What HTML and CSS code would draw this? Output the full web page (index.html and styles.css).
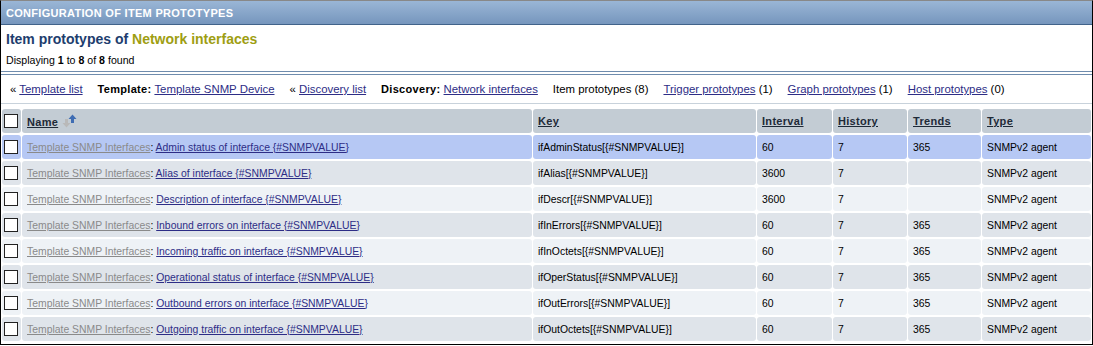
FILE: index.html
```html
<!DOCTYPE html>
<html>
  <head>
    <title>Configuration of item prototypes</title>
    <link rel="stylesheet" href="styles.css">
  </head>
  <body>
    <div class="frame">
      <div class="header-bar">CONFIGURATION OF ITEM PROTOTYPES</div>
      <div class="title-row">
        <span class="title-main">Item prototypes of</span>
        <span class="title-host">Network interfaces</span>
      </div>
      <div class="count-row">Displaying <b>1</b> to <b>8</b> of <b>8</b> found</div>
      <div class="nav-row">
        <span class="nav-item">« <a href="#">Template list</a></span>
        <span class="nav-item"><b>Template:</b> <a href="#">Template SNMP Device</a></span>
        <span class="nav-item">« <a href="#">Discovery list</a></span>
        <span class="nav-item"><b>Discovery:</b> <a href="#">Network interfaces</a></span>
        <span class="nav-item">Item prototypes (8)</span>
        <span class="nav-item"><a href="#">Trigger prototypes</a> (1)</span>
        <span class="nav-item"><a href="#">Graph prototypes</a> (1)</span>
        <span class="nav-item"><a href="#">Host prototypes</a> (0)</span>
      </div>

      <table class="list">
        <thead>
          <tr>
            <th class="col-check"><span class="checkbox"></span></th>
            <th class="col-name">
              <a href="#">Name</a>
              <span class="sort-arrows">
                <svg width="16" height="14" viewBox="0 0 16 14">
                  <path d="M3 5h3v4h2.5L4.5 13.5 0.5 9H3z" fill="#b9b9b9"/>
                  <path d="M9 9h3V5h2.5L10.5 0.5 6.5 5H9z" fill="#3f6db3"/>
                </svg>
              </span>
            </th>
            <th class="col-key"><a href="#">Key</a></th>
            <th class="col-interval"><a href="#">Interval</a></th>
            <th class="col-history"><a href="#">History</a></th>
            <th class="col-trends"><a href="#">Trends</a></th>
            <th class="col-type"><a href="#">Type</a></th>
          </tr>
        </thead>
        <tbody>
          <tr class="hover">
            <td><span class="checkbox"></span></td>
            <td><a class="tpl" href="#">Template SNMP Interfaces</a>: <a href="#">Admin status of interface {#SNMPVALUE}</a></td>
            <td>ifAdminStatus[{#SNMPVALUE}]</td>
            <td>60</td><td>7</td><td>365</td><td>SNMPv2 agent</td>
          </tr>
          <tr class="odd">
            <td><span class="checkbox"></span></td>
            <td><a class="tpl" href="#">Template SNMP Interfaces</a>: <a href="#">Alias of interface {#SNMPVALUE}</a></td>
            <td>ifAlias[{#SNMPVALUE}]</td>
            <td>3600</td><td>7</td><td></td><td>SNMPv2 agent</td>
          </tr>
          <tr class="even">
            <td><span class="checkbox"></span></td>
            <td><a class="tpl" href="#">Template SNMP Interfaces</a>: <a href="#">Description of interface {#SNMPVALUE}</a></td>
            <td>ifDescr[{#SNMPVALUE}]</td>
            <td>3600</td><td>7</td><td></td><td>SNMPv2 agent</td>
          </tr>
          <tr class="odd">
            <td><span class="checkbox"></span></td>
            <td><a class="tpl" href="#">Template SNMP Interfaces</a>: <a href="#">Inbound errors on interface {#SNMPVALUE}</a></td>
            <td>ifInErrors[{#SNMPVALUE}]</td>
            <td>60</td><td>7</td><td>365</td><td>SNMPv2 agent</td>
          </tr>
          <tr class="even">
            <td><span class="checkbox"></span></td>
            <td><a class="tpl" href="#">Template SNMP Interfaces</a>: <a href="#">Incoming traffic on interface {#SNMPVALUE}</a></td>
            <td>ifInOctets[{#SNMPVALUE}]</td>
            <td>60</td><td>7</td><td>365</td><td>SNMPv2 agent</td>
          </tr>
          <tr class="odd">
            <td><span class="checkbox"></span></td>
            <td><a class="tpl" href="#">Template SNMP Interfaces</a>: <a href="#">Operational status of interface {#SNMPVALUE}</a></td>
            <td>ifOperStatus[{#SNMPVALUE}]</td>
            <td>60</td><td>7</td><td>365</td><td>SNMPv2 agent</td>
          </tr>
          <tr class="even">
            <td><span class="checkbox"></span></td>
            <td><a class="tpl" href="#">Template SNMP Interfaces</a>: <a href="#">Outbound errors on interface {#SNMPVALUE}</a></td>
            <td>ifOutErrors[{#SNMPVALUE}]</td>
            <td>60</td><td>7</td><td>365</td><td>SNMPv2 agent</td>
          </tr>
          <tr class="odd">
            <td><span class="checkbox"></span></td>
            <td><a class="tpl" href="#">Template SNMP Interfaces</a>: <a href="#">Outgoing traffic on interface {#SNMPVALUE}</a></td>
            <td>ifOutOctets[{#SNMPVALUE}]</td>
            <td>60</td><td>7</td><td>365</td><td>SNMPv2 agent</td>
          </tr>
        </tbody>
      </table>
    </div>
  </body>
</html>
```

FILE: styles.css
```css
body {
  margin: 0;
  font-family: "Liberation Sans", Arial, sans-serif;
  font-size: 11px;
  color: #000;
  background: #fff;
}

a {
  color: #2d2d86;
}

.frame {
  width: 1091px;
  height: 343px;
  border: 1px solid #000;
  border-top-color: #888;
  overflow: hidden;
}

.header-bar {
  height: 23px;
  line-height: 24px;
  padding-left: 5px;
  background: linear-gradient(#9ab6d6, #7696bd);
  border-bottom: 1px solid #41638a;
  color: #fff;
  font-size: 11px;
  font-weight: bold;
  letter-spacing: 0.3px;
}

.title-row {
  height: 26px;
  line-height: 29px;
  padding-left: 5px;
  font-size: 14px;
  font-weight: bold;
}

.title-main {
  color: #1d3d6e;
}

.title-host {
  color: #9e9e12;
}

.count-row {
  height: 20px;
  line-height: 18px;
  padding-left: 5px;
  font-size: 10.6px;
  border-bottom: 1px solid #6f8cad;
}

.nav-row {
  display: flex;
  gap: 15px;
  height: 28px;
  align-items: center;
  padding-left: 9px;
  font-size: 11.4px;
  border-top: 1px solid #6f8cad;
  margin-top: 2px;
  border-bottom: 1px solid #c8d2db;
}

.nav-item b {
  font-size: 11px;
  letter-spacing: 0.3px;
}

.list {
  width: 100%;
  margin-top: 3px;
  table-layout: fixed;
  border-collapse: separate;
  border-spacing: 1px 2px;
}

.list th,
.list td {
  border-radius: 3px;
  padding: 0 5px;
  text-align: left;
  white-space: nowrap;
  overflow: hidden;
}

.list th {
  height: 24px;
  background: #c3ccd4;
  font-size: 11px;
  font-weight: bold;
  letter-spacing: 0.3px;
}

.list th a {
  color: #1e2a38;
}

.list td {
  height: 24px;
  font-size: 10.4px;
}

.list .col-check,
.list tbody td:first-child {
  width: 15px;
  padding: 0 2px;
}

.col-name {
  width: 500px;
}

.col-key {
  width: 213px;
}

.col-interval {
  width: 65px;
}

.col-history {
  width: 64px;
}

.col-trends {
  width: 63px;
}

.col-type {
  width: 99px;
}

.sort-arrows svg {
  vertical-align: -2px;
}

.checkbox {
  display: inline-block;
  width: 12px;
  height: 12px;
  border: 1px solid #222;
  background: #fff;
  vertical-align: middle;
}

tr.hover td {
  background: #b6c8f4;
}

tr.odd td {
  background: #dfe4ea;
}

tr.even td {
  background: #eef2f6;
}

a.tpl {
  color: #8a8a8a;
}
```
